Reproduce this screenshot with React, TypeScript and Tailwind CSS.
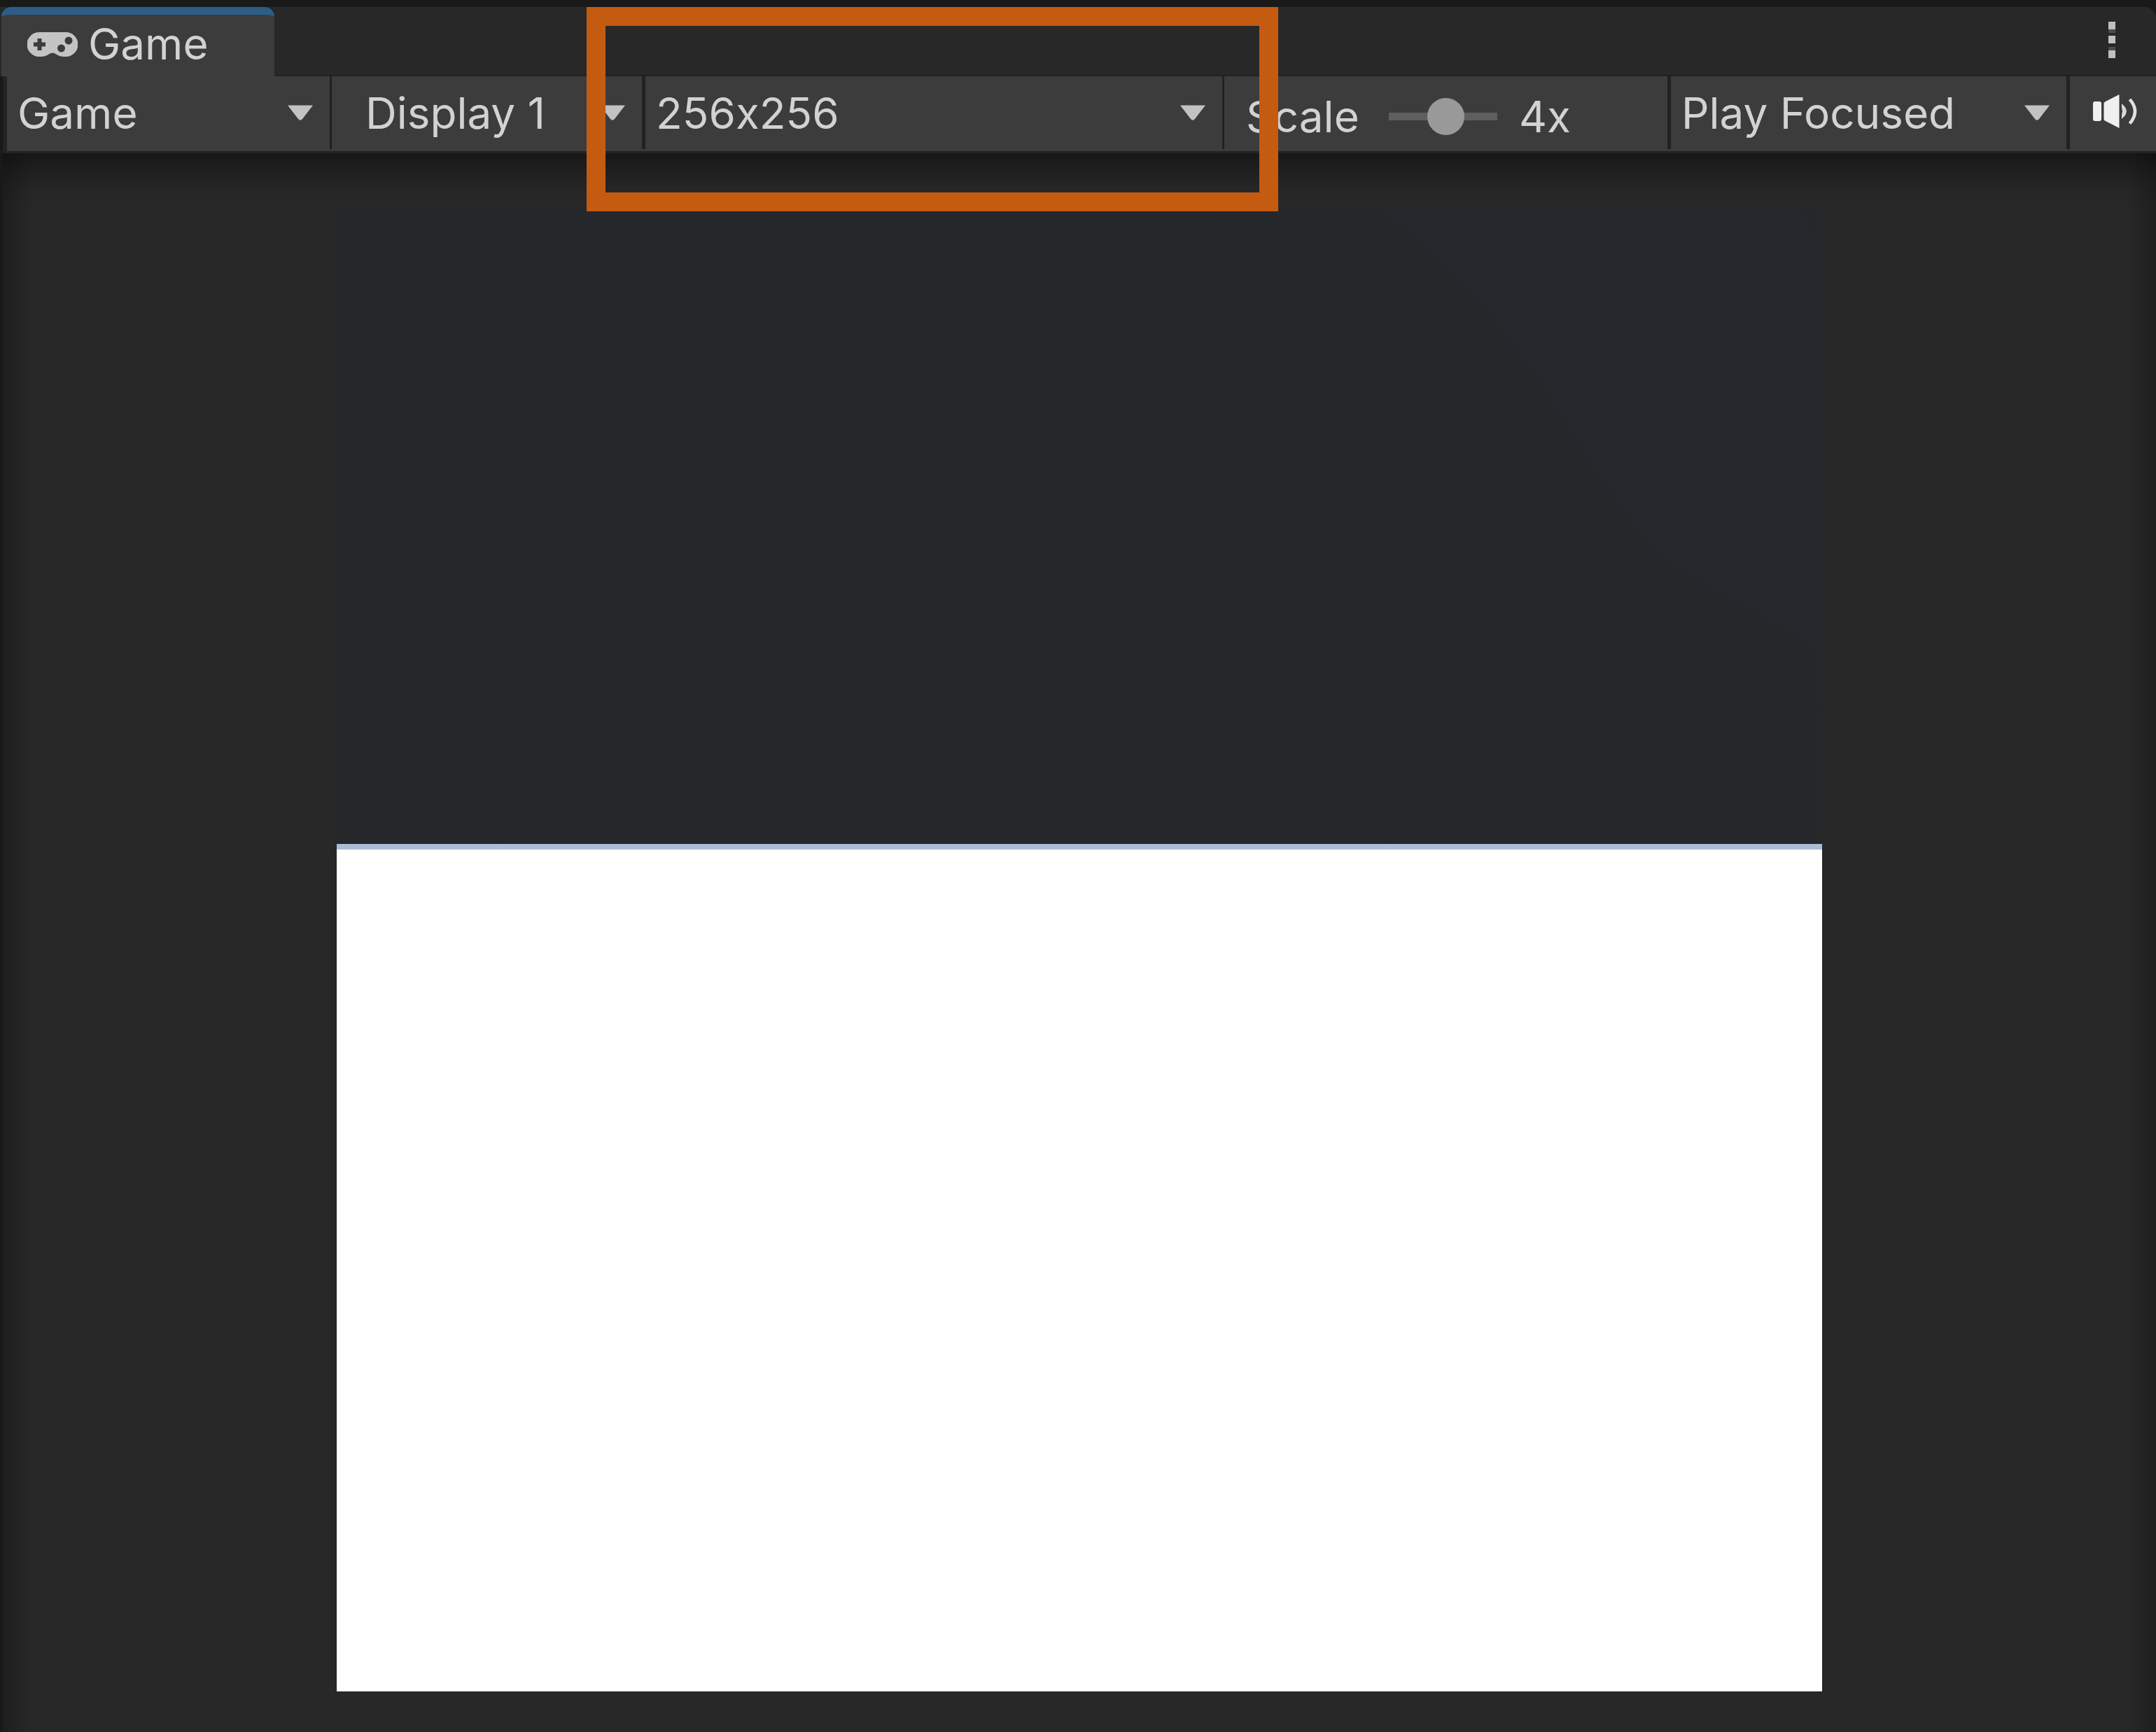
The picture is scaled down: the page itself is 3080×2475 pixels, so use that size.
import type { ReactNode } from "react";

function Arrow() {
  return (
    <svg viewBox="0 0 38 23" className="pointer-events-none col-start-1 row-start-1 mr-[23px] h-[23px] w-[38px] justify-self-end" aria-hidden="true">
      <path d="M1 0.5H37L22 20Q19 23.5 16 20Z" fill="#c2c2c2" />
    </svg>
  );
}

function Dropdown({ label, value, box, pad }: { label: string; value: string; box: string; pad: string }) {
  return (
    <div className={`grid h-[104px] shrink-0 items-center bg-[#3c3c3c] ${box}`}>
      <select
        aria-label={label}
        className={`col-start-1 row-start-1 h-full w-full appearance-none border-0 bg-transparent text-[#d2d2d2] outline-none [font-feature-settings:'calt'_0] [font-optical-sizing:none] ${pad}`}
      >
        <option>{value}</option>
      </select>
      <Arrow />
    </div>
  );
}

function Separator({ wide = false }: { wide?: boolean }) {
  return <div className={`h-[104px] shrink-0 bg-[#212121] ${wide ? "w-[5px]" : "w-[3px]"}`} />;
}

function GamepadIcon() {
  return (
    <svg viewBox="0 0 72 36" className="h-[36px] w-[72px]" aria-hidden="true">
      <path d="M17 0H55A17 17 0 0 1 55 35C49 35.500 45 34 40.500 31Q38.500 29.500 36 29.500Q33.500 29.500 31.500 31C27 34 23 35.500 17 35A17 17 0 0 1 17 0Z" fill="#c4c4c4" />
      <path d="M14.500 9H20.500V14.500H26V20.500H20.500V26H14.500V20.500H9V14.500H14.500Z" fill="#3c3c3c" />
      <circle cx="59" cy="12" r="5.500" fill="#3c3c3c" />
      <circle cx="48.500" cy="23" r="5.500" fill="#3c3c3c" />
    </svg>
  );
}

function KebabIcon() {
  return (
    <svg viewBox="0 0 12 54" className="h-[54px] w-[12px]" aria-hidden="true">
      <rect x="1" y="1" width="10" height="11" fill="#c0c0c0" />
      <rect x="1" y="12" width="10" height="5" fill="#4c4c4c" />
      <rect x="1" y="21" width="10" height="11" fill="#c0c0c0" />
      <rect x="1" y="37" width="10" height="5" fill="#4c4c4c" />
      <rect x="1" y="42" width="10" height="11" fill="#c0c0c0" />
    </svg>
  );
}

function SpeakerIcon() {
  return (
    <svg viewBox="0 0 64 48" className="h-[48px] w-[64px]" fill="none" aria-hidden="true">
      <rect x="0" y="10" width="12" height="28" rx="3" fill="#f0f0f0" />
      <path d="M15.500 13Q15.500 11.500 17 10.500L37.500 0V48L17 37.500Q15.500 36.500 15.500 35Z" fill="#f0f0f0" />
      <path d="M42 15.500Q51.500 24 42 32.500L42.500 26.500Q44 24 42.500 21.500Z" stroke="#e0e0e0" strokeWidth="2" fill="#d0d0d0" />
      <path d="M52.500 7Q67.500 24 52.500 41.500" stroke="#e2e2e2" strokeWidth="4.500" />
    </svg>
  );
}

function Sky() {
  return (
    <svg viewBox="0 0 1486 1486" preserveAspectRatio="none" className="min-h-0 w-full shrink grow-[911] basis-[0px] bg-[#26272b]" aria-hidden="true">
      <path
        d="M440 0C400 90 340 280 300 440C270 560 270 720 255 810C200 980 170 1200 162 1486H1050C1060 1320 1090 1150 1088 1040C1080 760 1080 520 1020 340C980 200 920 60 860 0Z"
        fill="#25282b"
      />
      <path
        d="M162 1486C175 1200 200 980 255 810C275 700 350 600 420 530C500 450 600 430 700 500C900 650 990 880 1040 1060C1060 1200 1060 1350 1050 1486Z"
        fill="#25272a"
      />
      <path d="M1045 0C1130 160 1190 330 1230 500C1270 640 1300 760 1330 820C1400 920 1460 1000 1486 1040V120L1460 0Z" fill="#25282d" />
      <path d="M1340 830C1400 920 1460 990 1486 1040V1160L1430 1420C1410 1200 1400 980 1340 830Z" fill="#25282a" />
    </svg>
  );
}

function Bar({ children }: { children: ReactNode }) {
  return <div className="flex h-[107px] items-start bg-[#3c3c3c]">{children}</div>;
}

export default function App() {
  return (
    <div className="relative flex min-h-screen flex-col bg-[#191919] pt-[10px] font-['Inter',sans-serif] text-[62px] leading-[75px] text-[#d2d2d2] [font-optical-sizing:none]">
      <header className="flex h-[99px] items-start justify-between rounded-tr-[16px] border-b-2 border-[#212121] bg-[#282828] pl-[2px]">
        <button
          type="button"
          className="-mb-[2px] flex h-[99px] w-[390px] items-center gap-[15px] overflow-hidden rounded-t-[14px] border-t-[11px] border-[#2c5d87] bg-[#3c3c3c] pb-[2px] pl-[37px]"
        >
          <GamepadIcon />
          <span className="pb-[4px]">Game</span>
        </button>
        <button type="button" aria-label="More options" className="mr-[57px] mt-[20px]">
          <KebabIcon />
        </button>
      </header>

      <div className="ml-[4px] border-b-[3px] border-l-[6px] border-[#232323]">
        <Bar>
          <Dropdown label="View" value="Game" box="w-[461px]" pad="pl-[15px]" />
          <Separator />
          <Dropdown label="Display" value="Display 1" box="w-[443px]" pad="pl-[48px]" />
          <Separator wide />
          <Dropdown label="Resolution" value="256x256" box="w-[824px]" pad="pl-[15px]" />
          <Separator />
          <div className="flex h-[107px] min-w-0 flex-1 items-center pl-[31px] pt-[7px]">
            <label htmlFor="scale" className="w-[204px]">Scale</label>
            <input
              id="scale"
              type="range"
              min={1}
              max={7}
              step="any"
              defaultValue={4.25}
              className="h-[53px] w-[155px] appearance-none bg-transparent [&::-webkit-slider-runnable-track]:h-[11px] [&::-webkit-slider-runnable-track]:bg-[#5e5e5e] [&::-webkit-slider-thumb]:-mt-[21px] [&::-webkit-slider-thumb]:h-[53px] [&::-webkit-slider-thumb]:w-[53px] [&::-webkit-slider-thumb]:appearance-none [&::-webkit-slider-thumb]:rounded-full [&::-webkit-slider-thumb]:bg-[#999999]"
            />
            <output htmlFor="scale" className="ml-[31px]">4x</output>
          </div>
          <Separator wide />
          <Dropdown label="Play mode" value="Play Focused" box="w-[565px]" pad="pl-[15px]" />
          <Separator wide />
          <button type="button" aria-label="Mute audio" className="flex h-[104px] w-[123px] shrink-0 items-center pb-[4px] pl-[33px]">
            <SpeakerIcon />
          </button>
        </Bar>
      </div>

      <main className="ml-[4px] flex flex-1 flex-col items-center bg-[#282828] bg-[linear-gradient(to_bottom,rgb(0_0_0/0.42),rgb(0_0_0/0.2)_26px,rgb(0_0_0/0.06)_52px,rgb(0_0_0/0)_76px),linear-gradient(to_right,rgb(0_0_0/0.25),rgb(0_0_0/0)_44px),linear-gradient(to_left,rgb(0_0_0/0.25),rgb(0_0_0/0)_44px)] pb-[58px] pt-[76px]">
        <div className="flex aspect-square min-h-0 w-[69%] flex-col">
          <Sky />
          <div className="h-[8px] shrink-0 bg-[#abbdd6]" />
          <div className="grow-[1203] basis-[0px] bg-white" />
        </div>
      </main>

      <div className="pointer-events-none absolute left-[838px] top-[10px] h-[292px] w-[988px] border-[27px] border-[#c55a11]" />
    </div>
  );
}
